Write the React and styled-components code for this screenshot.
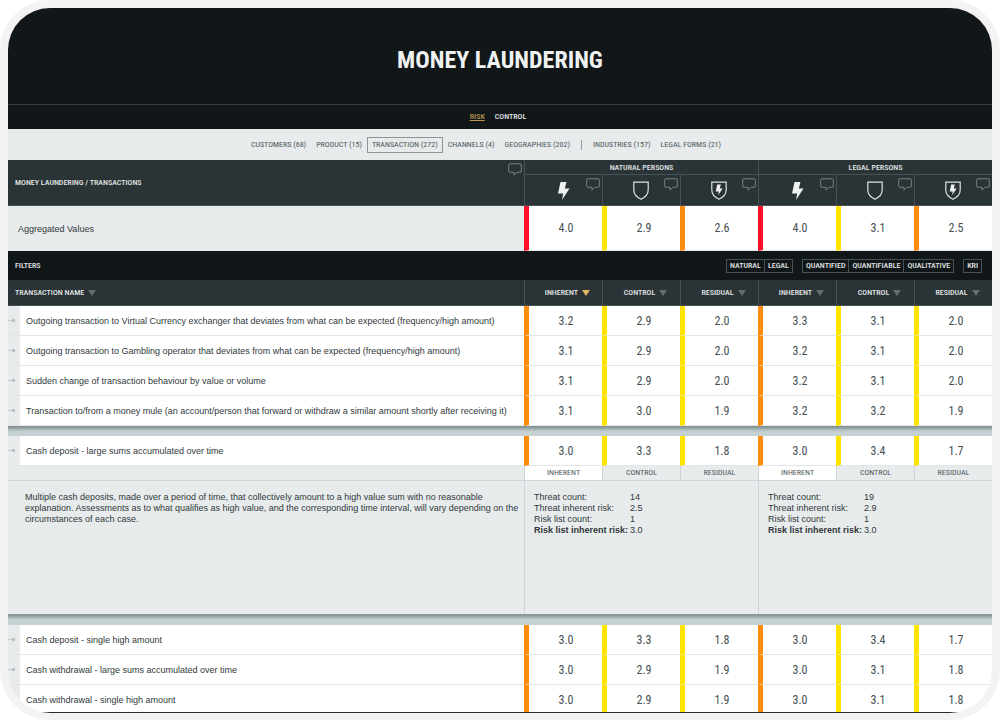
import React, { useState } from "react";
import styled, { createGlobalStyle } from "styled-components";

const narrow = `"Liberation Sans Narrow", "Roboto Condensed", "Liberation Sans", sans-serif`;
const body = `"Liberation Sans", Arial, sans-serif`;

const levels = {
    high: "#ff1028",
    medium: "#ff8c0c",
    low: "#ffe400",
};

const GlobalStyle = createGlobalStyle`
    * {
        box-sizing: border-box;
    }

    body {
        margin: 0;
        background: #fff;
        font-family: ${body};
        color: #31393c;
    }

    button {
        margin: 0;
        padding: 0;
        border: 0;
        background: none;
        color: inherit;
        font: inherit;
        cursor: pointer;
    }
`;

const Frame = styled.main`
    height: calc(100vh - 1px);
    overflow: hidden;
    border: 8px solid #f4f2f3;
    border-bottom-width: 7px;
    border-radius: 50px;
    background: #e7ebeb;
`;

const Screen = styled.div`
    height: 100%;
    overflow: hidden;
    border-bottom: 1px solid #2b2b2f;
`;

const Banner = styled.header`
    display: flex;
    align-items: center;
    justify-content: center;
    height: 97px;
    padding-top: 8px;
    background: #111618;
    border-bottom: 1px solid #3a4144;
`;

const Title = styled.h1`
    margin: 0;
    font: bold 24px/30px ${narrow};
    color: #f0f2f2;
`;

const ModeNav = styled.nav`
    display: flex;
    align-items: center;
    justify-content: center;
    gap: 10px;
    height: 24px;
    padding-right: 4px;
    background: #111618;
`;

const ModeLink = styled.a`
    font: 500 8px/12px ${narrow};
    color: ${props => props.$active ? "#b8944c" : "#e4e8e8"};
    text-decoration: ${props => props.$active ? "underline" : "none"};
`;

const Tabs = styled.nav`
    display: flex;
    align-items: center;
    justify-content: center;
    height: 31px;
    padding-right: 28px;
    background: #e7ebeb;
`;

const Tab = styled.button`
    height: 16px;
    padding: 0 4px;
    border: 1px solid ${props => props.$active ? "#8d9697" : "transparent"};
    font: 8px/14px ${narrow};
    color: #4d585b;
`;

const TabDivider = styled.span`
    width: 1px;
    height: 10px;
    margin: 0 6px;
    background: #939c9e;
`;

const Table = styled.table`
    width: 100%;
    table-layout: fixed;
    border-collapse: separate;
    border-spacing: 0;
`;

const NameCol = styled.col`
    width: auto;
`;

const ValueCol = styled.col`
    width: 78px;
`;

const HeadCell = styled.th`
    position: relative;
    height: ${props => props.$height || 15}px;
    padding: 1px 0 0;
    background: #2a3336;
    border-left: 1px solid #465255;
    font: 500 8px/12px ${narrow};
    color: #e4e8e8;
    text-align: center;
    vertical-align: middle;
    border-bottom: 1px solid #465255;

    &:first-child {
        border-left-color: ${props => props.$title ? "#2a3336" : "#465255"};
        padding-left: ${props => props.$title ? 6 : 0}px;
        text-align: ${props => props.$title ? "left" : "center"};
    }
`;

const IconBox = styled.span`
    display: flex;
    justify-content: center;
    padding-right: 2px;
`;

const Comment = styled.button`
    position: absolute;
    top: 3px;
    right: 2px;
    display: flex;
`;

const ValueCell = styled.td`
    height: ${props => props.$height || 30}px;
    padding: 0 0 0 1px;
    background: #fff;
    border-left: 5px solid ${props => levels[props.$level]};
    border-bottom: 1px solid #e3e6e7;
    font: 12px/14px ${narrow};
    color: #454f53;
    text-align: center;
`;

const AggregateName = styled.th`
    padding: 0 0 0 10px;
    background: #e7ebeb;
    font: 9px/14px ${body};
    text-align: left;
`;

const NameCell = styled.th`
    padding: 0;
    background: #fff;
    border-bottom: 1px solid #e3e6e7;
    font: 9px/12px ${body};
    text-align: left;
    white-space: nowrap;
`;

const NameInner = styled.div`
    display: flex;
    align-items: center;
    height: 29px;
    gap: 6px;
`;

const Rail = styled.span`
    display: flex;
    align-items: center;
    align-self: stretch;
    width: 12px;
    background: #e7ebeb;
`;

const FilterBar = styled.div`
    display: flex;
    align-items: center;
    gap: 9px;
    height: 29px;
    padding: 0 10px 0 7px;
    background: #111618;
    font: 500 8px/12px ${narrow};
    color: #e4e8e8;
`;

const FilterLabel = styled.span`
    flex: 1;
`;

const FilterGroup = styled.div`
    display: flex;
    border: 1px solid #465255;
`;

const FilterButton = styled.button`
    height: 12px;
    padding: 0 3px;

    & + & {
        border-left: 1px solid #465255;
    }
`;

const SortButton = styled.button`
    display: inline-flex;
    align-items: center;
    gap: 4px;
    padding-left: ${props => props.$indent ? 8 : 0}px;
`;

const Arrow = styled.span`
    border: solid transparent;
    border-width: 6px 4px 0;
    border-top-color: ${props => props.$active ? "#e2b75e" : "#646e71"};
`;

const Gap = styled.td`
    height: ${props => props.$height}px;
    padding: 0;
    background: linear-gradient(#82908f 0, #91a09f 2px, #b4c2c3 4px, #c5d1d2 6px);
`;

const SubCell = styled.td`
    height: 15px;
    padding: 0;
    background: ${props => props.$active ? "#fff" : "#e7ebeb"};
    border-left: 1px solid #ccd6d7;
    border-bottom: 1px solid #ccd6d7;
    font: 8px/12px ${narrow};
    color: #4d585b;
    text-align: center;

    &:first-child {
        border-left: 0;
    }
`;

const DetailCell = styled.td`
    height: 133px;
    padding: 11px 4px 0 9px;
    background: #e7ebeb;
    border-left: 1px solid #ccd6d7;
    font: 9px/11px ${body};
    vertical-align: top;

    &:first-child {
        border-left: 0;
        padding-left: 17px;
    }
`;

const Stats = styled.dl`
    display: grid;
    grid-template-columns: 96px 1fr;
    margin: 0;
`;

const StatName = styled.dt`
    font-weight: ${props => props.$strong ? "bold" : "normal"};
    white-space: nowrap;
`;

const StatValue = styled.dd`
    margin: 0;
`;

const tabs = ["CUSTOMERS (68)", "PRODUCT (15)", "TRANSACTION (272)", "CHANNELS (4)", "GEOGRAPHIES (202)"];
const moreTabs = ["INDUSTRIES (157)", "LEGAL FORMS (21)"];
const measures = ["INHERENT", "CONTROL", "RESIDUAL"];
const filters = [["NATURAL", "LEGAL"], ["QUANTIFIED", "QUANTIFIABLE", "QUALITATIVE"], ["KRI"]];

const topRows = [
    { name: "Outgoing transaction to Virtual Currency exchanger that deviates from what can be expected (frequency/high amount)", values: ["3.2", "2.9", "2.0", "3.3", "3.1", "2.0"] },
    { name: "Outgoing transaction to Gambling operator that deviates from what can be expected (frequency/high amount)", values: ["3.1", "2.9", "2.0", "3.2", "3.1", "2.0"] },
    { name: "Sudden change of transaction behaviour by value or volume", values: ["3.1", "2.9", "2.0", "3.2", "3.1", "2.0"] },
    { name: "Transaction to/from a money mule (an account/person that forward or withdraw a similar amount shortly after receiving it)", values: ["3.1", "3.0", "1.9", "3.2", "3.2", "1.9"] },
];

const openRow = { name: "Cash deposit - large sums accumulated over time", values: ["3.0", "3.3", "1.8", "3.0", "3.4", "1.7"] };

const bottomRows = [
    { name: "Cash deposit - single high amount", values: ["3.0", "3.3", "1.8", "3.0", "3.4", "1.7"] },
    { name: "Cash withdrawal - large sums accumulated over time", values: ["3.0", "2.9", "1.9", "3.0", "3.1", "1.8"] },
    { name: "Cash withdrawal - single high amount", values: ["3.0", "2.9", "1.9", "3.0", "3.1", "1.8"] },
];

const rowLevels = ["medium", "low", "low", "medium", "low", "low"];

const stats = [
    [["Threat count:", "14"], ["Threat inherent risk:", "2.5"], ["Risk list count:", "1"], ["Risk list inherent risk:", "3.0"]],
    [["Threat count:", "19"], ["Threat inherent risk:", "2.9"], ["Risk list count:", "1"], ["Risk list inherent risk:", "3.0"]],
];

function CommentButton() {
    return (
        <Comment aria-label="Comment">
            <svg width="14" height="13" viewBox="0 0 14 13" fill="none" stroke="#77827f">
                <path d="M2 .8h10q1.300 0 1.300 1.300v5.900q0 1.300-1.300 1.300H8.800L6 12.200V9.300H2Q.7 9.300.7 8V2.100Q.7.800 2 .8z" />
            </svg>
        </Comment>
    );
}

function MeasureIcon({ kind }) {
    const bolt = "M2.500 0H8.500L6.800 6.500H11.500L4 18l1.200-6.500H0z";
    if (kind === "INHERENT") {
        return <svg width="14" height="18" viewBox="-2 0 14 18"><path d={bolt} fill="#f0f2f2" /></svg>;
    }
    return (
        <svg width="16" height="19" viewBox="0 0 16 19">
            <path d="M.8 1.200h14.400v7.800c0 4.500-3.200 7.300-7.200 9.200C4 16.300.8 13.500.8 9z" fill="none" stroke="#dfe3e3" strokeWidth="1.200" />
            {kind === "RESIDUAL" && <path d={bolt} fill="#f0f2f2" transform="translate(4.700 3.500) scale(.6)" />}
        </svg>
    );
}

function Columns() {
    return (
        <colgroup>
            <NameCol />
            {[0, 1, 2, 3, 4, 5].map(n => <ValueCol key={n} />)}
        </colgroup>
    );
}

function Row({ row }) {
    return (
        <tr>
            <NameCell scope="row">
                <NameInner>
                    <Rail>
                        <svg width="8" height="5" viewBox="0 0 8 5">
                            <path d="M0 2.500h5" stroke="#c3cccd" />
                            <circle cx="5.500" cy="2.500" r="1.800" fill="#b7c2c3" />
                        </svg>
                    </Rail>
                    {row.name}
                </NameInner>
            </NameCell>
            {row.values.map((value, i) => <ValueCell key={i} $level={rowLevels[i]}>{value}</ValueCell>)}
        </tr>
    );
}

function App() {
    const [tab, setTab] = useState("TRANSACTION (272)");
    const [sort, setSort] = useState(0);

    const renderTab = name => (
        <Tab key={name} $active={name === tab} onClick={() => setTab(name)}>{name}</Tab>
    );

    return (
        <Frame>
            <GlobalStyle />
            <Screen>
                <Banner><Title>MONEY LAUNDERING</Title></Banner>
                <ModeNav>
                    <ModeLink href="#risk" $active>RISK</ModeLink>
                    <ModeLink href="#control">CONTROL</ModeLink>
                </ModeNav>
                <Tabs>
                    {tabs.map(renderTab)}
                    <TabDivider />
                    {moreTabs.map(renderTab)}
                </Tabs>

                <Table>
                    <Columns />
                    <thead>
                        <tr>
                            <HeadCell rowSpan={2} $title>
                                MONEY LAUNDERING / TRANSACTIONS
                                <CommentButton />
                            </HeadCell>
                            <HeadCell colSpan={3}>NATURAL PERSONS</HeadCell>
                            <HeadCell colSpan={3}>LEGAL PERSONS</HeadCell>
                        </tr>
                        <tr>
                            {[...measures, ...measures].map((kind, i) => (
                                <HeadCell key={i} $height={31} aria-label={kind}>
                                    <IconBox><MeasureIcon kind={kind} /></IconBox>
                                    <CommentButton />
                                </HeadCell>
                            ))}
                        </tr>
                    </thead>
                    <tbody>
                        <tr>
                            <AggregateName scope="row">Aggregated Values</AggregateName>
                            {["4.0", "2.9", "2.6", "4.0", "3.1", "2.5"].map((value, i) => (
                                <ValueCell key={i} $height={45} $level={["high", "low", "medium"][i % 3]}>{value}</ValueCell>
                            ))}
                        </tr>
                    </tbody>
                </Table>

                <FilterBar>
                    <FilterLabel>FILTERS</FilterLabel>
                    {filters.map(group => (
                        <FilterGroup key={group[0]}>
                            {group.map(name => <FilterButton key={name}>{name}</FilterButton>)}
                        </FilterGroup>
                    ))}
                </FilterBar>

                <Table>
                    <Columns />
                    <thead>
                        <tr>
                            <HeadCell $height={26} $title>
                                <SortButton>TRANSACTION NAME <Arrow /></SortButton>
                            </HeadCell>
                            {[...measures, ...measures].map((name, i) => (
                                <HeadCell key={i} $height={26}>
                                    <SortButton $indent onClick={() => setSort(i)}>{name} <Arrow $active={sort === i} /></SortButton>
                                </HeadCell>
                            ))}
                        </tr>
                    </thead>
                    <tbody>
                        {topRows.map(row => <Row key={row.name} row={row} />)}
                        <tr><Gap colSpan={7} $height={10} /></tr>
                        <Row row={openRow} />
                        <tr>
                            <SubCell />
                            {[...measures, ...measures].map((name, i) => (
                                <SubCell key={i} $active={i % 3 === 0}>{name}</SubCell>
                            ))}
                        </tr>
                        <tr>
                            <DetailCell>
                                Multiple cash deposits, made over a period of time, that collectively amount to a high value sum with no reasonable explanation. Assessments as to what qualifies as high value, and the corresponding time interval, will vary depending on the circumstances of each case.
                            </DetailCell>
                            {stats.map((list, i) => (
                                <DetailCell key={i} colSpan={3}>
                                    <Stats>
                                        {list.map(([name, value], n) => (
                                            <React.Fragment key={name}>
                                                <StatName $strong={n === 3}>{name}</StatName>
                                                <StatValue>{value}</StatValue>
                                            </React.Fragment>
                                        ))}
                                    </Stats>
                                </DetailCell>
                            ))}
                        </tr>
                        <tr><Gap colSpan={7} $height={11} /></tr>
                        {bottomRows.map(row => <Row key={row.name} row={row} />)}
                    </tbody>
                </Table>
            </Screen>
        </Frame>
    );
}

export default App;
